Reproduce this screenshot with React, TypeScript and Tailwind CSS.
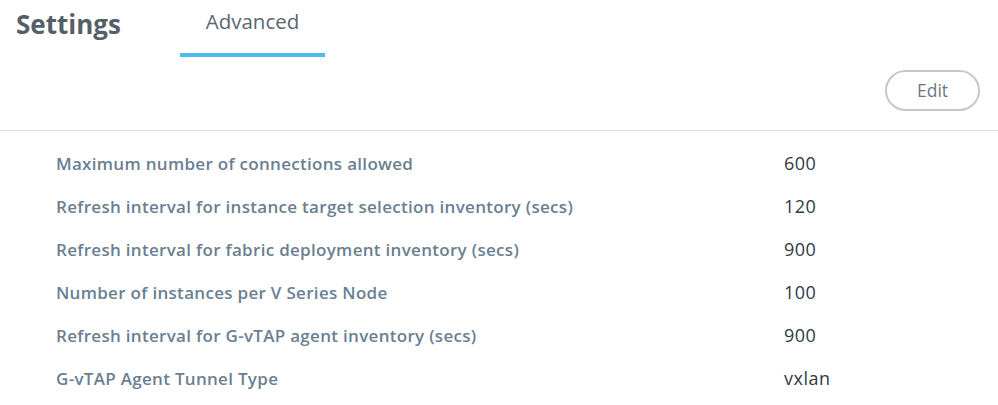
import React from "react";

const rows = [
  { label: "Maximum number of connections allowed", value: "600" },
  { label: "Refresh interval for instance target selection inventory (secs)", value: "120" },
  { label: "Refresh interval for fabric deployment inventory (secs)", value: "900" },
  { label: "Number of instances per V Series Node", value: "100" },
  { label: "Refresh interval for G-vTAP agent inventory (secs)", value: "900" },
  { label: "G-vTAP Agent Tunnel Type", value: "vxlan" },
];

const App: React.FC = () => {
  return (
    <div
      className="w-[998px] h-[405px] bg-white overflow-hidden"
      style={{ fontFamily: '"Open Sans", "Noto Sans", sans-serif' }}
    >
      {/* Header with tabs */}
      <div className="flex items-start h-[57px]">
        <h1 className="pl-4 pt-[4px] text-[26px] font-bold text-[#545f69] leading-[40px] w-[180px]">
          Settings
        </h1>
        <div className="flex flex-col items-center w-[145px]">
          <span className="pt-[6px] text-[20.5px] text-[#5b6670] leading-[30px]">Advanced</span>
          <div className="mt-[17px] h-[4px] w-full bg-[#4cb9f1]" />
        </div>
      </div>

      {/* Toolbar */}
      <div className="flex justify-end pr-[18px] pt-[13px] pb-[19px] border-b border-[#dbe2e8]">
        <button className="w-[95px] h-[41px] rounded-full border-2 border-[#c4c8cc] text-[17.5px] text-[#6c7784] bg-white">
          Edit
        </button>
      </div>

      {/* Rows */}
      <div className="pt-[11px]">
        {rows.map((row) => (
          <div key={row.label} className="flex items-center h-[43px] pl-[56px]">
            <span className="w-[728px] text-[17px] tracking-[0.3px] font-semibold text-[#6a7f92]">
              {row.label}
            </span>
            <span className="text-[18px] tracking-[0.5px] text-[#2f3a44]">{row.value}</span>
          </div>
        ))}
      </div>
    </div>
  );
};

export default App;
